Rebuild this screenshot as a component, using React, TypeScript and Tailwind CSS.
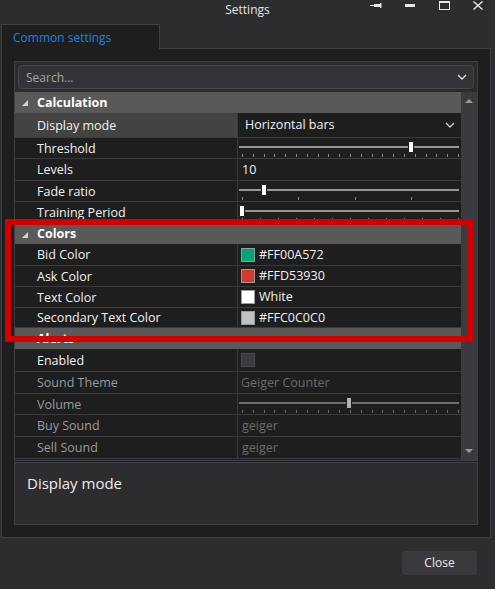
import type { ReactNode } from 'react'

type Row =
  | { type: 'category'; label: string; h: string }
  | { type: 'prop'; label: string; h: string; value: ReactNode; selected?: boolean; disabled?: boolean }

function Slider({ thumb, ticks, tickWidth, disabled }: { thumb: number; ticks: number; tickWidth: string; disabled?: boolean }) {
  const track = disabled ? 'bg-[#6e6e6e]' : 'bg-[#969696]'
  const tick = disabled ? 'bg-[#6a6a6a]' : 'bg-[#8c8c8c]'
  return (
    <div className="relative h-full w-full">
      <div className={`absolute left-[1px] right-[2px] top-[8px] h-[2px] ${track}`} />
      <div className={`absolute left-[4px] top-[16px] flex h-[3px] justify-between ${tickWidth}`}>
        {Array.from({ length: ticks }).map((_, i) => (
          <div key={i} className={`h-[3px] w-[1px] ${tick}`} />
        ))}
      </div>
      <div
        className={`absolute top-[3px] h-[12px] w-[6px] rounded-[1px] border border-[#1e1e1e] ${disabled ? 'bg-[#b4b4b4]' : 'bg-white'}`}
        style={{ left: thumb }}
      />
    </div>
  )
}

function Swatch({ color, label }: { color: string; label: string }) {
  return (
    <div className="flex items-center gap-[4px] pl-[3px]">
      <div className={`h-[14px] w-[14px] border border-[#9a9a9a] ${color}`} />
      <span className="pt-[1px]">{label}</span>
    </div>
  )
}

function Chevron({ className }: { className: string }) {
  return (
    <svg viewBox="0 0 10 6" className={className} fill="none" stroke="currentColor" strokeWidth="1.3">
      <path d="M1 1l4 4 4-4" />
    </svg>
  )
}

const rows: Row[] = [
  { type: 'category', label: 'Calculation', h: 'h-[21px]' },
  {
    type: 'prop',
    label: 'Display mode',
    h: 'h-[25px]',
    selected: true,
    value: (
      <div className="flex h-full w-full items-center justify-between pl-[7px] pr-[6px]">
        <span className="pt-[1px]">Horizontal bars</span>
        <Chevron className="h-[6px] w-[10px] text-[#cfcfcf]" />
      </div>
    ),
  },
  { type: 'prop', label: 'Threshold', h: 'h-[21px]', value: <Slider thumb={170} ticks={21} tickWidth="w-[217px]" /> },
  { type: 'prop', label: 'Levels', h: 'h-[22px]', value: <span className="pl-[4px] pt-[1px]">10</span> },
  { type: 'prop', label: 'Fade ratio', h: 'h-[21px]', value: <Slider thumb={23} ticks={4} tickWidth="w-[170px]" /> },
  { type: 'prop', label: 'Training Period', h: 'h-[22px]', value: <Slider thumb={1} ticks={13} tickWidth="w-[217px]" /> },
  { type: 'category', label: 'Colors', h: 'h-[20px]' },
  { type: 'prop', label: 'Bid Color', h: 'h-[22px]', value: <Swatch color="bg-[#00a572]" label="#FF00A572" /> },
  { type: 'prop', label: 'Ask Color', h: 'h-[21px]', value: <Swatch color="bg-[#d53930]" label="#FFD53930" /> },
  { type: 'prop', label: 'Text Color', h: 'h-[21px]', value: <Swatch color="bg-white" label="White" /> },
  { type: 'prop', label: 'Secondary Text Color', h: 'h-[20px]', value: <Swatch color="bg-[#c0c0c0]" label="#FFC0C0C0" /> },
  { type: 'category', label: 'Alerts', h: 'h-[21px]' },
  {
    type: 'prop',
    label: 'Enabled',
    h: 'h-[23px]',
    value: (
      <div className="pl-[3px]">
        <div className="h-[14px] w-[14px] border border-[#4a4a50] bg-[#3a3a40]" />
      </div>
    ),
  },
  { type: 'prop', label: 'Sound Theme', h: 'h-[22px]', disabled: true, value: <span className="pl-[3px] pt-[1px] text-[#6b6b6b]">Geiger Counter</span> },
  { type: 'prop', label: 'Volume', h: 'h-[21px]', disabled: true, value: <Slider thumb={108} ticks={21} tickWidth="w-[217px]" disabled /> },
  { type: 'prop', label: 'Buy Sound', h: 'h-[22px]', disabled: true, value: <span className="pl-[4px] pt-[1px] text-[#6b6b6b]">geiger</span> },
  { type: 'prop', label: 'Sell Sound', h: 'h-[22px]', disabled: true, value: <span className="pl-[4px] pt-[1px] text-[#6b6b6b]">geiger</span> },
]

export default function App() {
  return (
    <div className="relative flex h-[589px] w-[495px] flex-col overflow-hidden bg-[#2d2d30] font-['Open_Sans','Noto_Sans',sans-serif] text-[12.5px] text-[#f1f1f1]">
      {/* title bar */}
      <div className="grid h-[24px] grid-cols-[1fr_auto_1fr]">
        <div />
        <div className="pt-[1px] text-[12px] leading-[17px] text-[#e6e6e6]">Settings</div>
        <div className="flex justify-end text-[#e8e8e8]">
          <div className="flex h-[11px] w-[34px] items-center justify-center">
            <svg viewBox="0 0 13 5" className="h-[5px] w-[13px]" fill="currentColor">
              <rect x="0" y="2" width="5" height="1" />
              <rect x="4" y="1" width="6" height="3" />
              <rect x="10" y="0" width="1.5" height="5" />
            </svg>
          </div>
          <div className="flex h-[11px] w-[34px] items-center justify-center">
            <div className="h-[3px] w-[10px] bg-current" />
          </div>
          <div className="flex h-[11px] w-[34px] items-center justify-center">
            <div className="h-[9px] w-[11px] border border-t-[2px] border-current" />
          </div>
          <div className="flex h-[11px] w-[34px] items-center justify-center">
            <svg viewBox="0 0 10 9" className="h-[9px] w-[10px]" fill="none" stroke="currentColor" strokeWidth="1.4">
              <path d="M0.5 0.5l9 8M9.5 0.5l-9 8" />
            </svg>
          </div>
        </div>
      </div>

      {/* tab */}
      <div className="relative z-10 -mb-px ml-[1px] flex h-[25px] w-[159px] items-center border border-b-0 border-[#3f3f46] bg-[#1e1e1e] pl-[11px] pt-[1px] text-[12px] text-[#1584e0]">
        Common settings
      </div>

      {/* panel */}
      <div className="ml-[1px] flex h-[490px] w-[490px] flex-col gap-[1px] border border-[#3f3f46] bg-[#1e1e1e] px-[12px] pt-[12px] pb-[12px]">
        <div className="flex h-[400px] flex-col border border-[#3f3f46] bg-[#2b2b2e]">
          <div className="mx-[3px] mt-[3px] flex h-[24px] items-center justify-between rounded-[4px] border border-[#46464b] bg-[#333337] pl-[7px] pr-[6px]">
            <span className="pt-[1px] text-[12px] text-[#a6a6a6]">Search...</span>
            <Chevron className="h-[6px] w-[10px] text-[#e0e0e0]" />
          </div>
          <div className="mt-[3px] flex h-[368px]">
            <div className="flex w-[446px] flex-col bg-[#1e1e1e]">
              {rows.map((r) =>
                r.type === 'category' ? (
                  <div key={r.label} className={`flex shrink-0 items-center bg-[#595959] pt-[1px] font-bold text-white ${r.h}`}>
                    <svg viewBox="0 0 6 6" className="ml-[7px] mr-[9px] h-[6px] w-[6px]" fill="#d0d0d0">
                      <path d="M6 0V6H0Z" />
                    </svg>
                    {r.label}
                  </div>
                ) : (
                  <div key={r.label} className={`flex shrink-0 border-b border-[#3a3a3c] ${r.h}`}>
                    <div
                      className={`flex w-[223px] items-center border-r border-[#3a3a3c] pl-[22px] pt-[2px] ${r.selected ? 'bg-[#434343]' : ''} ${r.disabled ? 'text-[#9b9b9b]' : ''}`}
                    >
                      {r.label}
                    </div>
                    <div className="flex h-full flex-1 items-center">{r.value}</div>
                  </div>
                ),
              )}
            </div>
            <div className="flex w-[16px] flex-col items-center justify-between bg-[#3a3a3f] py-[7px]">
              <svg viewBox="0 0 8 4" className="h-[4px] w-[8px]" fill="#9a9a9a">
                <path d="M0 4L4 0L8 4Z" />
              </svg>
              <svg viewBox="0 0 8 4" className="h-[4px] w-[8px]" fill="#9a9a9a">
                <path d="M0 0L8 0L4 4Z" />
              </svg>
            </div>
          </div>
        </div>
        <div className="h-[63px] border border-[#3f3f46] bg-[#2d2d30] pl-[12px] pt-[9px] text-[15px] text-[#ececec]">
          Display mode
        </div>
      </div>

      {/* footer */}
      <div className="flex flex-1 items-start justify-end pr-[18px] pt-[13px]">
        <button className="h-[24px] w-[75px] rounded-[3px] bg-[#3a3a3e] text-[12px] text-[#ececec]">Close</button>
      </div>

      {/* annotation */}
      <div className="pointer-events-none absolute left-[5px] top-[219px] h-[123px] w-[468px] border-[6px] border-[#d40000]" />
    </div>
  )
}
